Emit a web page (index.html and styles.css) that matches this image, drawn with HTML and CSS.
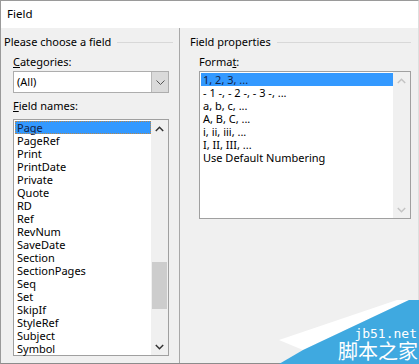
FILE: index.html
```html
<!DOCTYPE html>
<html>
<head>
<meta charset="utf-8">
<link rel="stylesheet" href="styles.css">
</head>
<body>
<div class="window">
  <div class="titlebar">Field</div>
  <div class="content">
    <div class="panel left">
      <div class="group-head"><span>Please choose a field</span><i class="rule"></i></div>
      <div class="label"><u>C</u>ategories:</div>
      <div class="combo">
        <span class="combo-text">(All)</span>
        <span class="combo-btn"><svg width="9" height="5" viewBox="0 0 9 5"><path d="M0.5 0.5 L4.5 4.5 L8.5 0.5" fill="none" stroke="#555" stroke-width="1"/></svg></span>
      </div>
      <div class="label"><u>F</u>ield names:</div>
      <div class="listbox names">
        <div class="items">
          <div class="item sel focus">Page</div>
          <div class="item">PageRef</div>
          <div class="item">Print</div>
          <div class="item">PrintDate</div>
          <div class="item">Private</div>
          <div class="item">Quote</div>
          <div class="item">RD</div>
          <div class="item">Ref</div>
          <div class="item">RevNum</div>
          <div class="item">SaveDate</div>
          <div class="item">Section</div>
          <div class="item">SectionPages</div>
          <div class="item">Seq</div>
          <div class="item">Set</div>
          <div class="item">SkipIf</div>
          <div class="item">StyleRef</div>
          <div class="item">Subject</div>
          <div class="item">Symbol</div>
        </div>
        <div class="scrollbar">
          <div class="arrow"><svg width="9" height="6" viewBox="0 0 9 6"><path d="M0.8 5 L4.5 1.3 L8.2 5" fill="none" stroke="#333" stroke-width="1.5"/></svg></div>
          <div class="track"><div class="thumb"></div></div>
          <div class="arrow"><svg width="9" height="6" viewBox="0 0 9 6"><path d="M0.8 1 L4.5 4.7 L8.2 1" fill="none" stroke="#333" stroke-width="1.5"/></svg></div>
        </div>
      </div>
    </div>
    <div class="sep"></div>
    <div class="panel right">
      <div class="group-head"><span>Field properties</span><i class="rule"></i></div>
      <div class="label fmt">Forma<u>t</u>:</div>
      <div class="listbox formats">
        <div class="items">
          <div class="item sel">1, 2, 3, ...</div>
          <div class="item">- 1 -, - 2 -, - 3 -, ...</div>
          <div class="item">a, b, c, ...</div>
          <div class="item">A, B, C, ...</div>
          <div class="item">i, ii, iii, ...</div>
          <div class="item">I, II, III, ...</div>
          <div class="item">Use Default Numbering</div>
        </div>
        <div class="scrollbar disabled">
          <div class="arrow"><svg width="9" height="6" viewBox="0 0 9 6"><path d="M0.8 5 L4.5 1.3 L8.2 5" fill="none" stroke="#c4c4c4" stroke-width="1.5"/></svg></div>
          <div class="track"></div>
          <div class="arrow"><svg width="9" height="6" viewBox="0 0 9 6"><path d="M0.8 1 L4.5 4.7 L8.2 1" fill="none" stroke="#c4c4c4" stroke-width="1.5"/></svg></div>
        </div>
      </div>
    </div>
  </div>
  <div class="watermark">
    <svg class="wm-shape" width="160" height="64" viewBox="0 0 160 64">
      <polygon points="20,40 138,0 150,0 44,50" fill="#ffffff"/>
      <polygon points="150,0 160,0 160,64 20,64 44,50" fill="#3fa9e0"/>
    </svg>
    <div class="wm-url">jb51.net</div>
    <div class="wm-name">脚本之家</div>
  </div>
</div>
</body>
</html>
```

FILE: styles.css
```css
* { box-sizing: border-box; }
html, body {
  margin: 0;
  padding: 0;
  width: 419px;
  height: 364px;
  overflow: hidden;
  background: #f0f0f0;
}
body {
  font-family: "Noto Sans", "Open Sans", sans-serif;
  font-size: 11px;
  color: #000;
}
.window {
  position: relative;
  width: 419px;
  height: 364px;
  border-top: 1px solid #9a9a9a;
  border-left: 1px solid #9a9a9a;
  border-bottom: 1px solid #8c8c8c;
  border-right: 1px solid #dedede;
  background: #f0f0f0;
  display: flex;
  flex-direction: column;
}
.titlebar {
  height: 27px;
  background: #fff;
  padding-left: 6px;
  line-height: 25px;
  font-size: 11.5px;
  flex: none;
}
.content {
  flex: 1;
  display: flex;
}
.panel { display: flex; flex-direction: column; }
.left { width: 178px; padding-left: 3px; }
.right { flex: 1; padding-left: 10px; }
.sep {
  width: 1px;
  background: #a8a8a8;
}
.group-head {
  display: flex;
  align-items: center;
  height: 14px;
  margin-top: 7px;
  line-height: 14px;
  white-space: nowrap;
}
.rule {
  flex: 1;
  height: 1px;
  background: #d8d8d8;
  margin-left: 6px;
  margin-right: 6px;
}
.right .rule { margin-right: 7px; }
.label {
  margin-left: 9px;
  margin-top: 6px;
  height: 14px;
  line-height: 14px;
}
.combo {
  margin-left: 9px;
  margin-top: 2px;
  width: 156px;
  height: 22px;
  background: #fff;
  border: 1px solid #adadad;
  display: flex;
  align-items: center;
}
.combo-text { flex: 1; padding-left: 3px; line-height: 20px; }
.combo-btn {
  width: 17px;
  height: 20px;
  background: #dadada;
  border-left: 1px solid #b8b8b8;
  display: flex;
  align-items: center;
  justify-content: center;
}
.listbox {
  margin-left: 9px;
  background: #fff;
  border: 1px solid #a0a0a0;
  display: flex;
}
.names {
  margin-top: 6px;
  width: 156px;
  height: 237px;
}
.formats {
  margin-top: 2px;
  width: 212px;
  height: 148px;
}
.items { flex: 1; padding: 1px 0 0 1px; }
.item {
  height: 13px;
  line-height: 13px;
  padding-left: 2px;
  white-space: nowrap;
}
.item.sel {
  background: #3399ff;
  color: #142244;
}
.item.focus { outline: 1px dotted #b8874a; outline-offset: -1px; }
.scrollbar {
  width: 17px;
  display: flex;
  flex-direction: column;
  background: #f0f0f0;
}
.arrow {
  height: 17px;
  display: flex;
  align-items: center;
  justify-content: center;
}
.track { flex: 1; }
.thumb {
  margin-top: 125px;
  height: 47px;
  margin-left: 1px;
  margin-right: 1px;
  background: #cdcdcd;
}
.watermark {
  position: absolute;
  right: -1px;
  bottom: -1px;
  width: 160px;
  height: 64px;
}
.wm-shape { position: absolute; left: 0; top: 0; }
.wm-url {
  position: absolute;
  right: 2px;
  top: 27px;
  font-family: "DejaVu Sans Mono", monospace;
  font-size: 13px;
  line-height: 14px;
  color: #fff;
}
.wm-name {
  position: absolute;
  right: 1px;
  top: 40px;
  font-family: "Noto Sans CJK SC", sans-serif;
  font-size: 20px;
  line-height: 22px;
  color: #fff;
}
```
